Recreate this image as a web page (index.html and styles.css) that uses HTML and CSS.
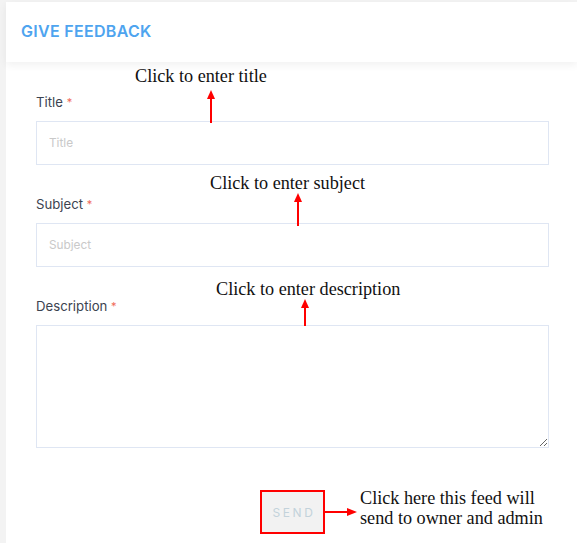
FILE: index.html
```html
<!DOCTYPE html>
<html>
<head>
<meta charset="utf-8">
<link rel="stylesheet" href="styles.css">
</head>
<body>
<div class="page">
  <div class="header"><h1 class="header-title">GIVE FEEDBACK</h1></div>
  <form class="form">
    <div class="group">
      <label class="label">Title <span class="req">*</span></label>
      <input class="field" type="text" placeholder="Title">
    </div>
    <div class="group">
      <label class="label">Subject <span class="req">*</span></label>
      <input class="field" type="text" placeholder="Subject">
    </div>
    <div class="group">
      <label class="label">Description <span class="req">*</span></label>
      <textarea class="field area"></textarea>
    </div>
    <div class="actions">
      <button class="send" type="button">SEND</button>
    </div>
  </form>

  <div class="note note-title">Click to enter title</div>
  <svg class="arrow arrow-up a1" width="10" height="33" viewBox="0 0 10 33"><polygon points="5,0 9,9 1,9" fill="#f00"/><rect x="4" y="8" width="2" height="25" fill="#f00"/></svg>

  <div class="note note-subject">Click to enter subject</div>
  <svg class="arrow arrow-up a2" width="10" height="33" viewBox="0 0 10 33"><polygon points="5,0 9,9 1,9" fill="#f00"/><rect x="4" y="8" width="2" height="25" fill="#f00"/></svg>

  <div class="note note-desc">Click to enter description</div>
  <svg class="arrow arrow-up a3" width="10" height="27" viewBox="0 0 10 27"><polygon points="5,0 9,9 1,9" fill="#f00"/><rect x="4" y="8" width="2" height="19" fill="#f00"/></svg>

  <svg class="arrow a4" width="34" height="10" viewBox="0 0 34 10"><rect x="0" y="4" width="26" height="2" fill="#f00"/><polygon points="34,5 24,1 24,9" fill="#f00"/></svg>
  <div class="note note-send">Click here this feed will<br>send to owner and admin</div>
</div>
</body>
</html>
```
FILE: styles.css
```css
html, body {
  margin: 0;
  padding: 0;
}
body {
  background: #f3f3f3;
  width: 577px;
  height: 543px;
  overflow: hidden;
}
.page {
  position: relative;
  margin: 2px 0 0 6px;
  background: #fff;
  height: 541px;
}
.header {
  height: 60px;
  box-sizing: border-box;
  padding: 0 0 2px 15px;
  display: flex;
  align-items: center;
  background: #fff;
  box-shadow: 0 3px 8px rgba(0,0,0,0.06);
  position: relative;
  z-index: 1;
}
.header-title {
  margin: 0;
  font-family: Inter, "Open Sans", sans-serif;
  font-weight: 600;
  font-size: 16px;
  color: #4ea4ef;
  letter-spacing: 0.3px;
}
.form {
  padding: 32px 28px 0 30px;
  display: flex;
  flex-direction: column;
}
.group {
  display: flex;
  flex-direction: column;
  gap: 11px;
  margin-bottom: 31px;
}
.label {
  display: block;
  height: 16px;
  font-family: Inter, "Open Sans", sans-serif;
  font-size: 13.2px;
  line-height: 16px;
  color: #3c4350;
}
.req {
  color: #f06a5a;
  font-size: 11px;
  vertical-align: top;
}
.field {
  box-sizing: border-box;
  height: 44px;
  width: 513px;
  border: 1px solid #dfe6f3;
  border-radius: 0;
  padding: 0 12px;
  font-family: Inter, "Open Sans", sans-serif;
  font-size: 11.8px;
  color: #333;
  outline: none;
  background: #fff;
}
.field::placeholder {
  color: #c9c9c9;
}
.area {
  height: 123px;
  resize: vertical;
}
.actions {
  display: flex;
  justify-content: center;
  margin-top: 11px;
}
.send {
  width: 65px;
  height: 44px;
  box-sizing: border-box;
  border: 2px solid #f00;
  background: #f2f2f2;
  color: #c3d2db;
  font-family: Inter, "Open Sans", sans-serif;
  font-size: 12px;
  letter-spacing: 2.6px;
  padding: 0 0 0 3px;
}
.note {
  position: absolute;
  font-family: "Liberation Serif", serif;
  font-size: 18.2px;
  line-height: 20px;
  color: #111;
  white-space: nowrap;
  z-index: 2;
}
.note-title { left: 129px; top: 64px; }
.note-subject { left: 204px; top: 171px; }
.note-desc { left: 210px; top: 277px; }
.note-send { left: 354px; top: 486px; }
.arrow {
  position: absolute;
  z-index: 2;
}
.a1 { left: 200px; top: 88px; }
.a2 { left: 287px; top: 191px; }
.a3 { left: 294px; top: 297px; }
.a4 { left: 317px; top: 505px; }
```
